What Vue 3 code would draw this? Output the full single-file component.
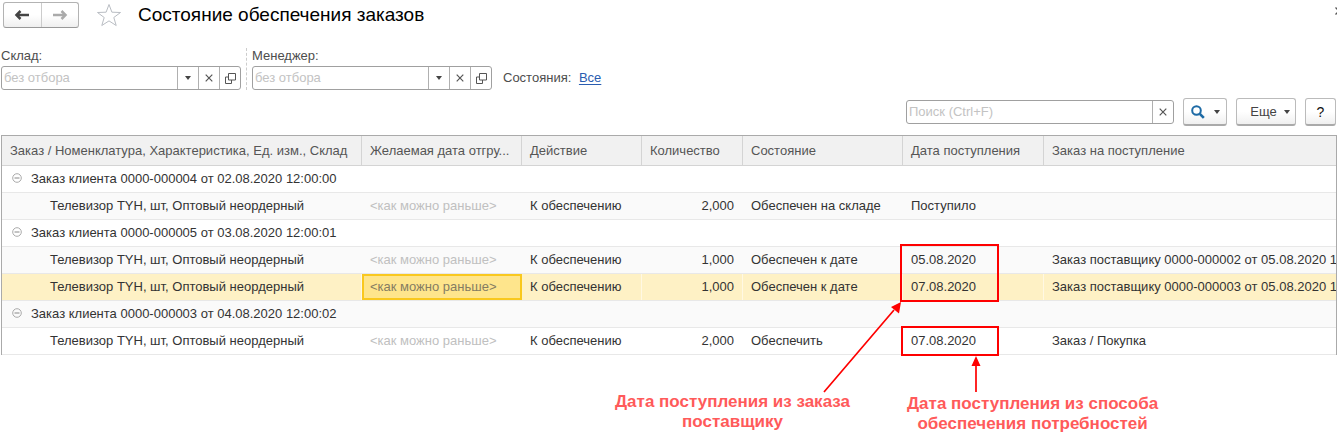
<script setup>
import { ref } from 'vue'

const filters = [
  { id: 'warehouse', label: 'Склад:' },
  { id: 'manager', label: 'Менеджер:' },
]
const values = ref({ warehouse: '', manager: '' })
const search = ref('')

const columns = [
  { key: 'name', title: 'Заказ / Номенклатура, Характеристика, Ед. изм., Склад' },
  { key: 'wish', title: 'Желаемая дата отгру...' },
  { key: 'action', title: 'Действие' },
  { key: 'qty', title: 'Количество' },
  { key: 'state', title: 'Состояние' },
  { key: 'date', title: 'Дата поступления' },
  { key: 'source', title: 'Заказ на поступление' },
]

const item = (qty, state, date, source, extra = {}) => ({
  name: 'Телевизор ТYН, шт, Оптовый неордерный',
  wish: '<как можно раньше>',
  action: 'К обеспечению',
  qty,
  state,
  date,
  source,
  ...extra,
})

const rows = [
  { group: true, name: 'Заказ клиента 0000-000004 от 02.08.2020 12:00:00' },
  item('2,000', 'Обеспечен на складе', 'Поступило', '', { shade: true }),
  { group: true, name: 'Заказ клиента 0000-000005 от 03.08.2020 12:00:01' },
  item('1,000', 'Обеспечен к дате', '05.08.2020', 'Заказ поставщику 0000-000002 от 05.08.2020 1', { shade: true }),
  item('1,000', 'Обеспечен к дате', '07.08.2020', 'Заказ поставщику 0000-000003 от 05.08.2020 1', { selected: true }),
  { group: true, shade: true, name: 'Заказ клиента 0000-000003 от 04.08.2020 12:00:02' },
  item('2,000', 'Обеспечить', '07.08.2020', 'Заказ / Покупка'),
]
</script>

<template>
  <main class="page">
    <header class="titlebar">
      <div class="nav">
        <button type="button" aria-label="Назад">
          <svg width="16" height="12" viewBox="0 0 16 12"><path d="M15 6H4" stroke="#444" stroke-width="2.500" /><path d="M6.500 2L2.500 6l4 4" fill="none" stroke="#444" stroke-width="2.500" /></svg>
        </button>
        <button type="button" aria-label="Вперед">
          <svg width="16" height="12" viewBox="0 0 16 12"><path d="M1 6h11" stroke="#aaa" stroke-width="2.500" /><path d="M9.500 2l4 4-4 4" fill="none" stroke="#aaa" stroke-width="2.500" /></svg>
        </button>
      </div>
      <button type="button" class="star" aria-label="Избранное">
        <svg width="26" height="24" viewBox="0 0 26 24"><path d="M13 1.500l2.900 7.700 8.600.3-6.700 5 2.400 8L13 17.900l-7.200 4.600 2.400-8-6.700-5 8.600-.3z" fill="#fff" stroke="#b9bdc3" stroke-width="1" /></svg>
      </button>
      <h1>Состояние обеспечения заказов</h1>
      <button type="button" class="close" aria-label="Закрыть">
        <svg width="8" height="8" viewBox="0 0 8 8"><path d="M.5.500l7 7M7.500.500l-7 7" stroke="#555" stroke-width="1.300" /></svg>
      </button>
    </header>

    <section class="filters">
      <div v-for="f in filters" :key="f.id" class="filter">
        <label :for="f.id">{{ f.label }}</label>
        <div class="field">
          <input :id="f.id" v-model="values[f.id]" type="text" placeholder="без отбора" />
          <button type="button" aria-label="Выбрать">
            <svg width="6" height="4" viewBox="0 0 6 4"><path d="M0 0h6L3 4z" fill="#444" /></svg>
          </button>
          <button type="button" aria-label="Очистить">
            <svg width="8" height="8" viewBox="0 0 8 8"><path d="M.7.700l6.600 6.600M7.300.700L.7 7.300" stroke="#555" stroke-width="1.200" /></svg>
          </button>
          <button type="button" aria-label="Открыть">
            <svg width="11" height="11" viewBox="0 0 11 11"><path d="M3.500.500h7v6.500h-7zM3.500 4H.5v6.500h6V7" fill="none" stroke="#555" /></svg>
          </button>
        </div>
      </div>
      <p class="states">Состояния: <a href="#">Все</a></p>
    </section>

    <section class="toolbar">
      <div class="field search">
        <input v-model="search" type="text" placeholder="Поиск (Ctrl+F)" aria-label="Поиск" />
        <button type="button" aria-label="Очистить поиск">
          <svg width="8" height="8" viewBox="0 0 8 8"><path d="M.7.700l6.600 6.600M7.300.700L.7 7.300" stroke="#555" stroke-width="1.200" /></svg>
        </button>
      </div>
      <button type="button" class="btn find" aria-label="Найти">
        <svg width="14" height="14" viewBox="0 0 14 14"><circle cx="5.500" cy="5.500" r="4.300" fill="none" stroke="#1d6aa5" stroke-width="2" /><path d="M8.800 8.800l4 4" stroke="#1d6aa5" stroke-width="2.600" /></svg>
        <svg width="6" height="4" viewBox="0 0 6 4"><path d="M0 0h6L3 4z" fill="#444" /></svg>
      </button>
      <button type="button" class="btn more">
        Еще
        <svg width="6" height="4" viewBox="0 0 6 4"><path d="M0 0h6L3 4z" fill="#444" /></svg>
      </button>
      <button type="button" class="btn help">?</button>
    </section>

    <section class="report">
      <table>
        <colgroup>
          <col v-for="c in columns" :key="c.key" :class="'col-' + c.key" />
        </colgroup>
        <thead>
          <tr>
            <th v-for="c in columns" :key="c.key" scope="col">{{ c.title }}</th>
          </tr>
        </thead>
        <tbody>
          <tr v-for="(r, i) in rows" :key="i" :class="{ group: r.group, shade: r.shade, selected: r.selected }">
            <td v-for="c in columns" :key="c.key" :class="c.key">
              <button v-if="r.group && c.key === 'name'" type="button" class="toggle" aria-label="Свернуть">
                <svg width="10" height="10" viewBox="0 0 10 10"><circle cx="5" cy="5" r="4.300" fill="none" stroke="#aaa" /><path d="M2.500 5h5" stroke="#888" /></svg>
              </button>{{ r[c.key] }}
            </td>
          </tr>
        </tbody>
      </table>

      <svg class="marks" width="400" height="170" viewBox="0 0 400 170">
        <g fill="none" stroke="#fe0000" stroke-width="2">
          <rect x="101" y="10" width="97" height="56" />
          <rect x="102" y="92" width="96" height="28" />
          <path d="M24 157L94 75M176 157V130" stroke-width="1.700" />
        </g>
        <path d="M101 67l-2 11.500-8-6.500zM176 121l4.500 10h-9z" fill="#fe0000" />
      </svg>
      <p class="note supplier">Дата поступления из заказа<br />поставщику</p>
      <p class="note method">Дата поступления из способа<br />обеспечения потребностей</p>
    </section>
  </main>
</template>

<style>
body {
  background: #fff;
  overflow: hidden;
}
</style>

<style scoped>
.page {
  font: 13px/16px "Liberation Sans", Arial, sans-serif;
  color: #333;
}
h1,
p {
  margin: 0;
}
button,
input {
  box-sizing: border-box;
  margin: 0;
  padding: 0;
  border: 0;
  background: none;
  font: inherit;
  color: inherit;
}
button {
  display: flex;
  align-items: center;
  justify-content: center;
}
svg {
  display: block;
  flex: none;
}
.titlebar {
  display: flex;
  align-items: center;
  height: 30px;
  padding-left: 3px;
}
.nav {
  display: flex;
  box-sizing: border-box;
  width: 76px;
  height: 26px;
  border: 1px solid #b3b3b3;
  border-bottom-color: #999;
  border-radius: 3px;
  background: linear-gradient(#fff 50%, #efefef);
}
.nav button {
  flex: 1;
}
.nav button + button {
  border-left: 1px solid #ccc;
}
.star {
  margin: 0 16px 0 17px;
}
h1 {
  flex: 1;
  font-size: 19px;
  line-height: 24px;
  font-weight: 400;
  color: #000;
}
.close {
  flex: none;
  margin-right: -6px;
  padding-bottom: 8px;
}
.filters {
  display: flex;
  align-items: flex-end;
  margin-top: 18px;
  padding-left: 1px;
  color: #4d4d4d;
}
.filter + .filter {
  margin-left: 5px;
  padding-left: 5px;
  border-left: 1px dashed #ccc;
}
.filter label {
  display: block;
  margin-bottom: 2px;
}
.field {
  display: flex;
  box-sizing: border-box;
  width: 240px;
  height: 24px;
  border: 1px solid #a0a0a0;
  border-radius: 3px;
  background: #fff;
}
.field input {
  flex: 1;
  min-width: 0;
  padding: 0 2px;
  outline: 0;
}
.field input::placeholder {
  color: #c3c3c3;
  opacity: 1;
}
.field button {
  width: 21px;
  border-left: 1px solid #b0b0b0;
}
.states {
  margin-left: 11px;
  padding-bottom: 4px;
}
.states a {
  margin-left: 4px;
  color: #2a5db0;
  text-underline-offset: 2px;
}
.toolbar {
  display: flex;
  align-items: center;
  justify-content: flex-end;
  height: 28px;
  margin-top: 8px;
  padding-right: 1px;
}
.search {
  width: 268px;
  margin-right: 9px;
}
.btn {
  height: 28px;
  border: 1px solid #bbb;
  border-bottom: 2px solid #aaa;
  border-radius: 3px;
  background: linear-gradient(#fff 50%, #f0f0f0);
}
.find {
  width: 44px;
  gap: 9px;
  margin-right: 9px;
}
.more {
  width: 60px;
  gap: 7px;
  margin-right: 9px;
  padding-left: 8px;
  color: #444;
}
.help {
  width: 31px;
  font-size: 14px;
  color: #111;
}
.report {
  position: relative;
  margin-top: 9px;
  padding: 0 0 80px 1px;
}
table {
  width: 100%;
  table-layout: fixed;
  border-collapse: separate;
  border-spacing: 0;
  border: solid #aaa;
  border-width: 1px 1px 0;
}
.col-name { width: 360px; }
.col-wish { width: 160px; }
.col-action { width: 120px; }
.col-qty { width: 101px; }
.col-state { width: 160px; }
.col-date { width: 141px; }
th,
td {
  box-sizing: border-box;
  overflow: hidden;
  padding: 0 0 0 8px;
  text-align: left;
  font-weight: 400;
  white-space: nowrap;
}
th {
  height: 30px;
  border-right: 1px solid #d4d4d4;
  border-bottom: 1px solid #d4d4d4;
  background: #f1f1f1;
  color: #555;
}
th:last-child {
  border-right: 0;
}
td {
  height: 27px;
  border-bottom: 1px solid #e8e8e8;
}
td.name {
  padding-left: 48px;
}
.group td.name {
  padding-left: 10px;
}
.toggle {
  display: inline-flex;
  margin-right: 9px;
}
td.wish {
  color: #c0c0c0;
}
td.qty {
  padding-right: 9px;
  text-align: right;
}
.shade td {
  background: #fafafa;
}
.selected td {
  background: #fef1c5;
}
.selected td:not(:last-child) {
  box-shadow: inset -1px 0 #fff8e3;
}
.selected td.wish {
  background: #fee58c;
  box-shadow: inset 0 0 0 2px #f9c81e;
  color: #857c62;
}
.marks {
  position: absolute;
  left: 800px;
  top: 100px;
}
.note {
  position: absolute;
  font-size: 17px;
  line-height: 20px;
  font-weight: 700;
  text-align: center;
  white-space: nowrap;
  color: #ff5a5a;
}
.supplier {
  left: 615px;
  top: 257px;
}
.method {
  left: 907px;
  top: 259px;
}
</style>
